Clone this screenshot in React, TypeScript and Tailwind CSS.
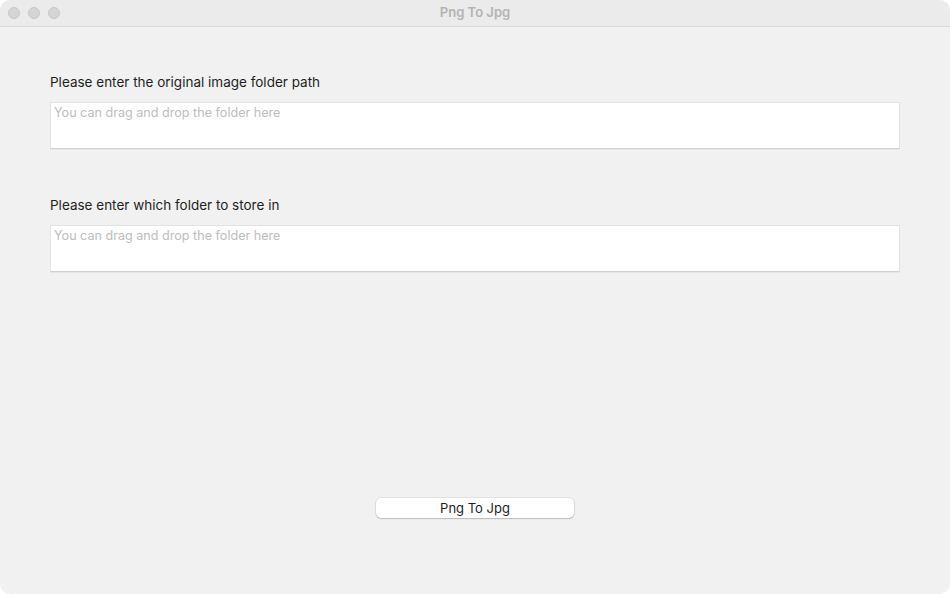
import React from "react"

function TrafficLights() {
  return (
    <div className="absolute left-[8px] top-[7px] flex gap-[8px]">
      {[0, 1, 2].map((i) => (
        <div key={i} className="w-[12px] h-[12px] rounded-full bg-[#d5d5d5] border border-[#c6c6c6]" />
      ))}
    </div>
  )
}

function FolderField({ label }: { label: string }) {
  return (
    <div className="flex flex-col">
      <div className="text-[13.5px] leading-[16px] text-[#1e1e1e]">{label}</div>
      <textarea
        className="mt-[12px] h-[47px] w-full resize-none bg-white border border-[#e2e2e2] border-b-[#cfcfcf] px-[3px] py-[1px] text-[12.6px] leading-[18px] text-[#1e1e1e] placeholder:text-[#bdbdbd] outline-none shadow-[0_1px_0_rgba(0,0,0,0.04)]"
        placeholder="You can drag and drop the folder here"
      />
    </div>
  )
}

export default function App() {
  return (
    <div className="w-[950px] h-[594px] bg-white" style={{ fontFamily: "Inter, 'Helvetica Neue', Arial, sans-serif" }}>
      <div className="w-full h-full rounded-[10px] overflow-hidden bg-[#f1f1f1] flex flex-col">
        <div className="relative h-[27px] shrink-0 bg-[#ebebeb] border-b border-[#d9d9d9] flex items-center justify-center">
          <TrafficLights />
          <span className="text-[13px] font-semibold text-[#b3b3b3]">Png To Jpg</span>
        </div>
        <div className="flex-1 flex flex-col px-[50px] pt-[47px] pb-[76px]">
          <FolderField label="Please enter the original image folder path" />
          <div className="mt-[48px]">
            <FolderField label="Please enter which folder to store in" />
          </div>
          <div className="flex-1" />
          <div className="flex justify-center">
            <button className="w-[198px] h-[20px] rounded-[5px] bg-white text-[13px] leading-[20px] text-[#1e1e1e] shadow-[0_0_0_0.5px_rgba(0,0,0,0.12),0_1px_1.5px_rgba(0,0,0,0.18)]">
              Png To Jpg
            </button>
          </div>
        </div>
      </div>
    </div>
  )
}
